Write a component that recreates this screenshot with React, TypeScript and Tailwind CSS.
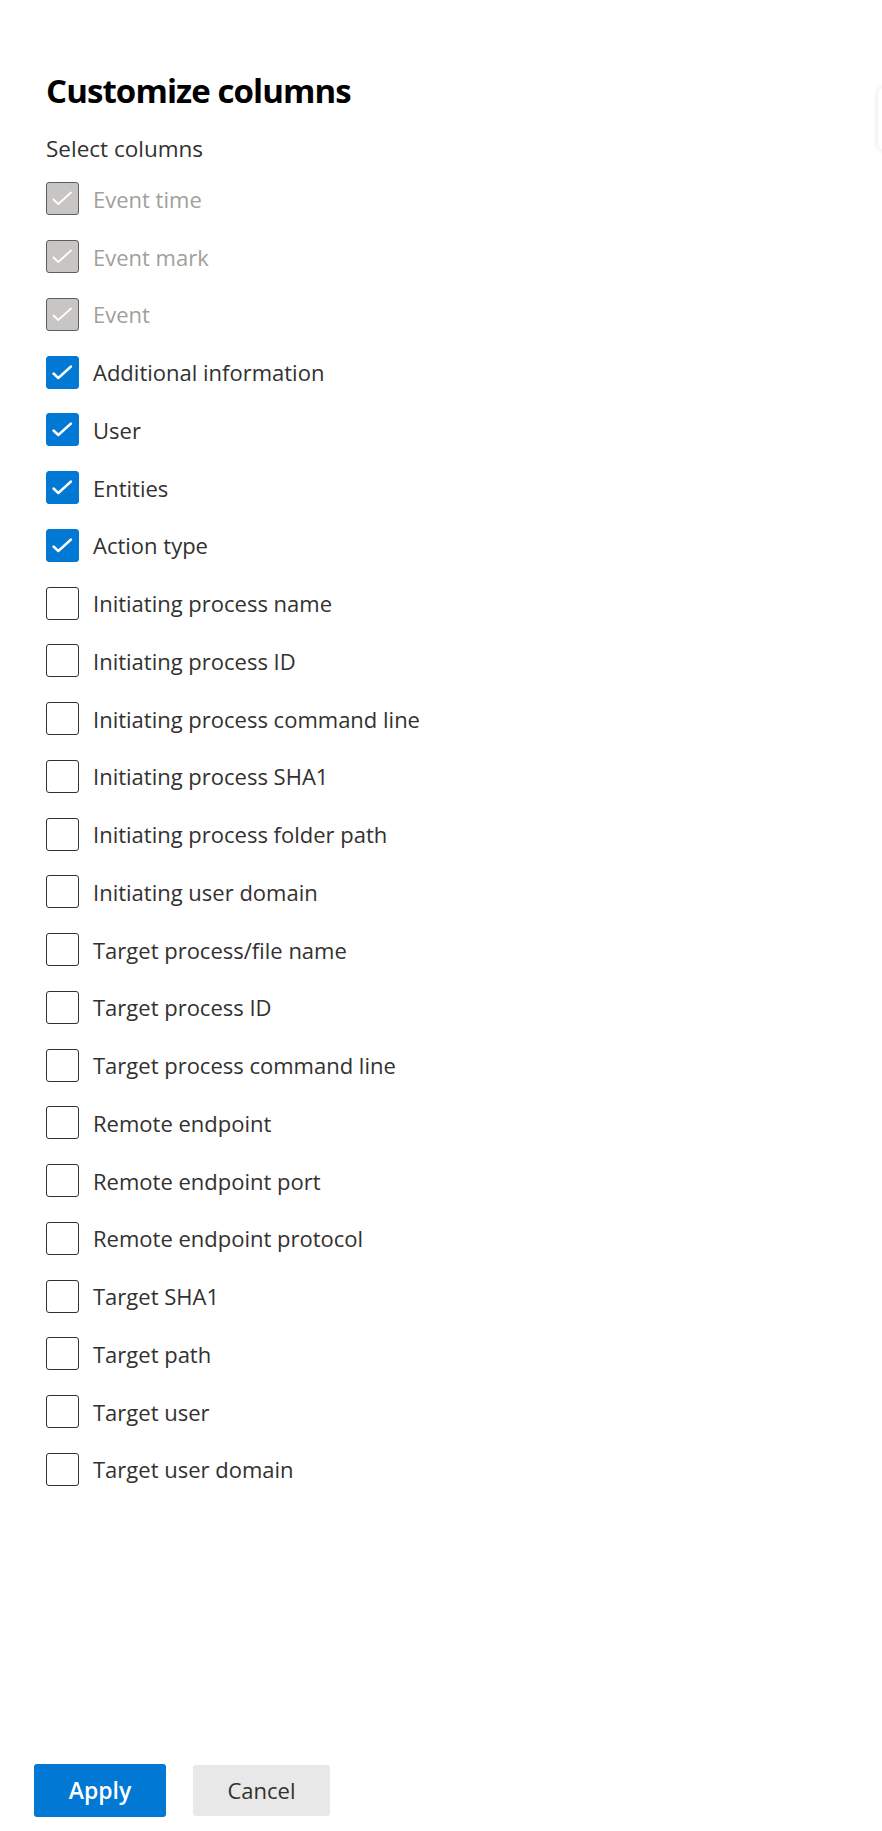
import React, { useState } from 'react';

type Column = { id: string; label: string; locked?: boolean; checked: boolean };

const COLUMNS: Column[] = [
  { id: 'eventTime', label: 'Event time', locked: true, checked: true },
  { id: 'eventMark', label: 'Event mark', locked: true, checked: true },
  { id: 'event', label: 'Event', locked: true, checked: true },
  { id: 'additionalInfo', label: 'Additional information', checked: true },
  { id: 'user', label: 'User', checked: true },
  { id: 'entities', label: 'Entities', checked: true },
  { id: 'actionType', label: 'Action type', checked: true },
  { id: 'ipName', label: 'Initiating process name', checked: false },
  { id: 'ipId', label: 'Initiating process ID', checked: false },
  { id: 'ipCmd', label: 'Initiating process command line', checked: false },
  { id: 'ipSha1', label: 'Initiating process SHA1', checked: false },
  { id: 'ipFolder', label: 'Initiating process folder path', checked: false },
  { id: 'iuDomain', label: 'Initiating user domain', checked: false },
  { id: 'tpName', label: 'Target process/file name', checked: false },
  { id: 'tpId', label: 'Target process ID', checked: false },
  { id: 'tpCmd', label: 'Target process command line', checked: false },
  { id: 'remoteEp', label: 'Remote endpoint', checked: false },
  { id: 'remotePort', label: 'Remote endpoint port', checked: false },
  { id: 'remoteProto', label: 'Remote endpoint protocol', checked: false },
  { id: 'targetSha1', label: 'Target SHA1', checked: false },
  { id: 'targetPath', label: 'Target path', checked: false },
  { id: 'targetUser', label: 'Target user', checked: false },
  { id: 'targetUserDomain', label: 'Target user domain', checked: false },
];

const CheckBox: React.FC<{ checked: boolean; disabled?: boolean }> = ({ checked, disabled }) => {
  let box = 'border-[#323130] bg-white';
  if (disabled) box = 'border-[#5f5e5c] bg-[#c8c6c4]';
  else if (checked) box = 'border-[#0078d4] bg-[#0078d4]';

  return (
    <span className={`flex h-[33px] w-[33px] shrink-0 items-center justify-center rounded-[3px] border-[1.6px] ${box}`}>
      {checked && (
        <svg width="33" height="33" viewBox="0 0 33 33" fill="none" className="-m-[1.6px]">
          <polyline
            points="7.5,17.5 12.3,22 25,10.5"
            stroke="white"
            strokeWidth={disabled ? 1.8 : 2.4}
            strokeLinecap="round"
            strokeLinejoin="round"
          />
        </svg>
      )}
    </span>
  );
};

const App: React.FC = () => {
  const [columns, setColumns] = useState(COLUMNS);

  const toggle = (id: string) => {
    setColumns(cols => cols.map(c => (c.id === id && !c.locked ? { ...c, checked: !c.checked } : c)));
  };

  return (
    <div className="relative flex h-[1831px] w-full flex-col overflow-hidden bg-white font-['Open_Sans','Noto_Sans',sans-serif]">
      {/* edge of the panel behind, peeking in on the right */}
      <div className="absolute right-[-40px] top-[88px] h-[62px] w-[44px] rounded-md bg-white shadow-[0_0_6px_rgba(0,0,0,0.12)]" />

      <div className="pl-[46px] pt-[69px]">
        <h1 className="text-[33px] font-bold leading-[44px] tracking-[-0.9px] text-black">Customize columns</h1>
        <div className="mt-[21.5px] text-[22.5px] font-medium leading-[28px] text-[#323130]">Select columns</div>

        <ul className="mt-[7.5px]">
          {columns.map(col => (
            <li key={col.id} className="h-[57.75px]">
              <button
                type="button"
                onClick={() => toggle(col.id)}
                className={`flex h-full items-center gap-[14px] text-left text-[22px] leading-none ${
                  col.locked ? 'cursor-default text-[#a19f9d]' : 'text-[#323130]'
                }`}
              >
                <CheckBox checked={col.checked} disabled={col.locked} />
                <span>{col.label}</span>
              </button>
            </li>
          ))}
        </ul>
      </div>

      <div className="mt-auto flex gap-[27px] pb-[14px] pl-[34px]">
        <button className="h-[53px] w-[132px] rounded-[3px] bg-[#0078d4] text-[23px] font-semibold text-white">
          Apply
        </button>
        <button className="mt-[1px] h-[51px] w-[137px] rounded-[3px] bg-[#e8e8e8] text-[22px] text-[#323130]">
          Cancel
        </button>
      </div>
    </div>
  );
};

export default App;
